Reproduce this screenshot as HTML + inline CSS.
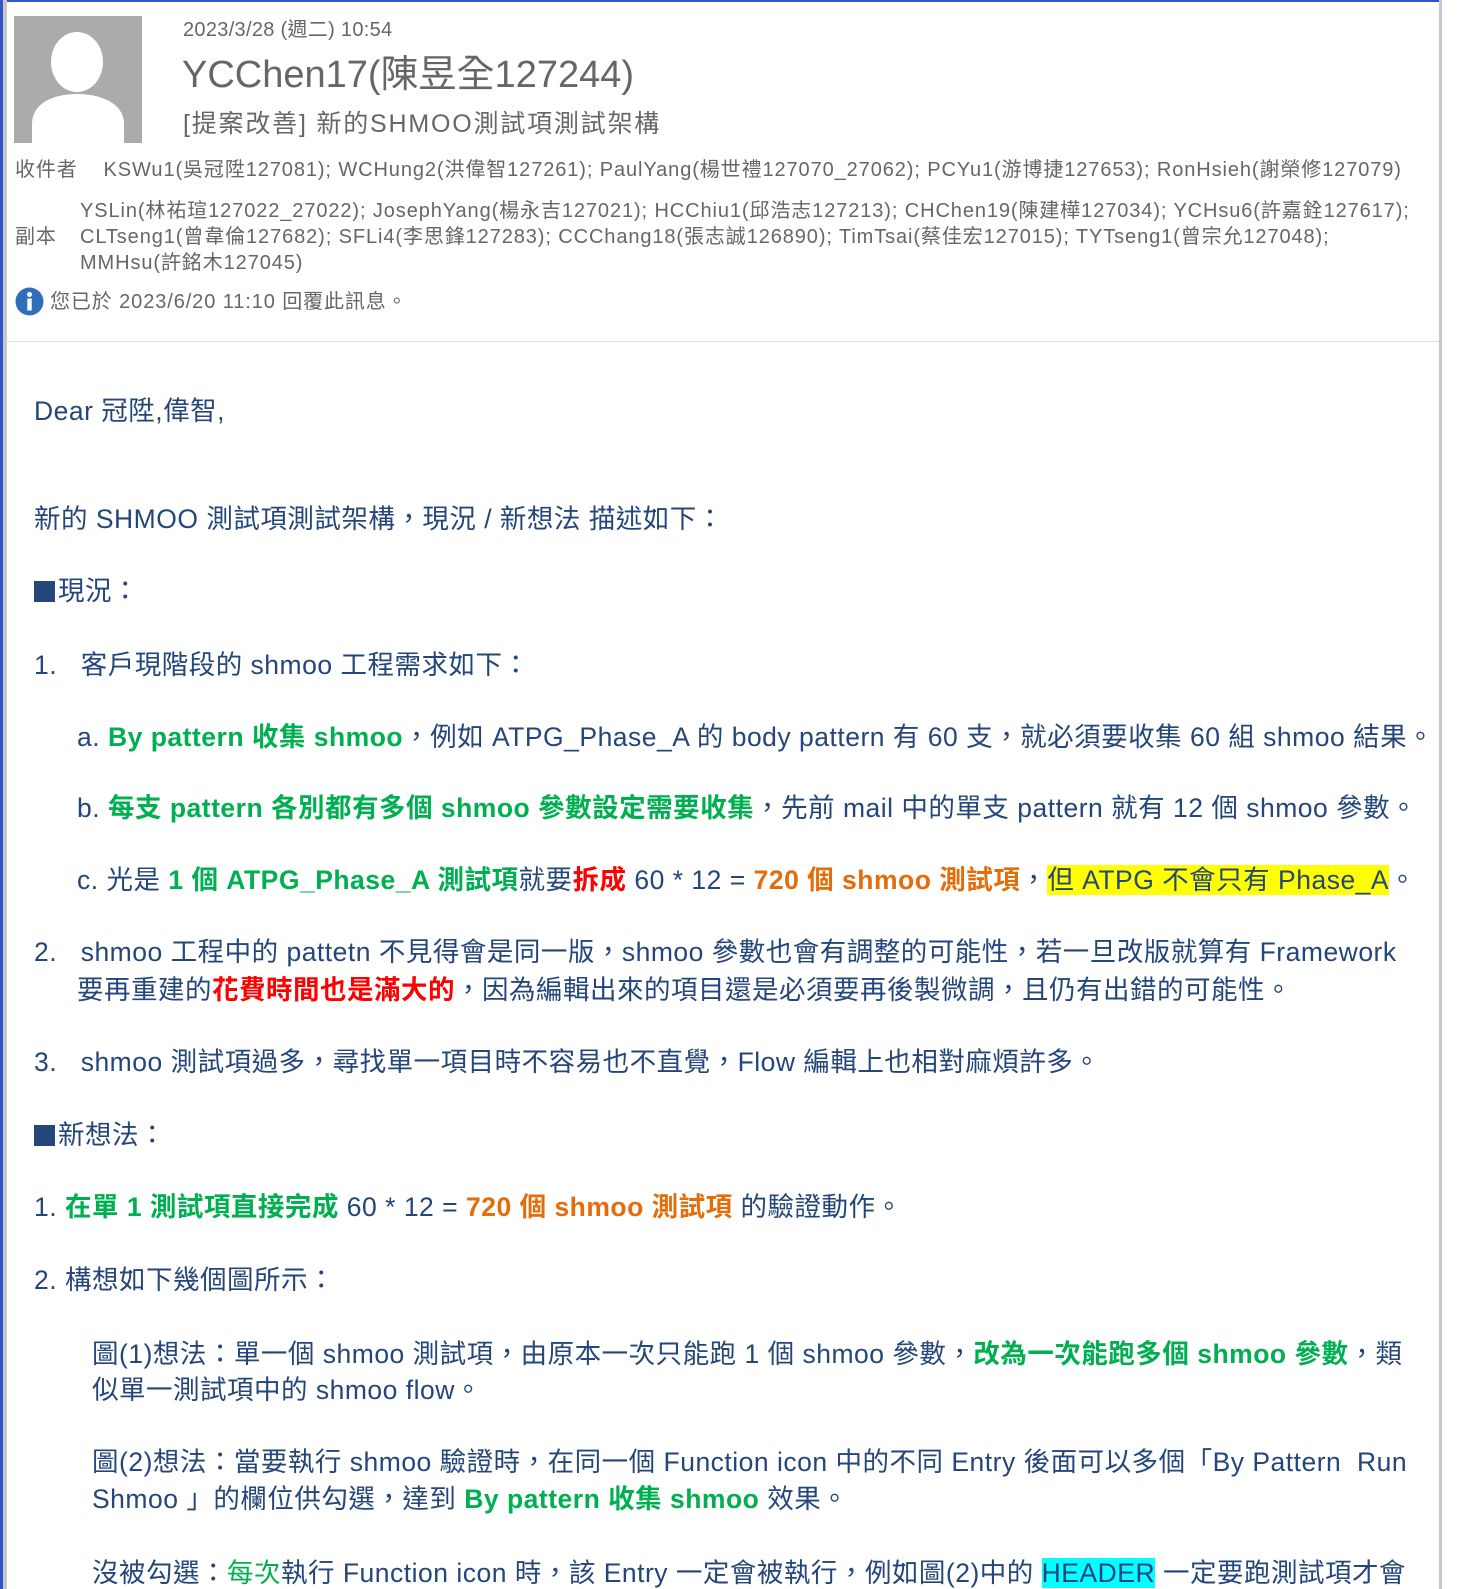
<!DOCTYPE html>
<html><head><meta charset="utf-8">
<style>
html,body{margin:0;padding:0}
body{width:1462px;height:1589px;position:relative;background:#fff;overflow:hidden;font-family:"Liberation Sans","Noto Sans CJK TC",sans-serif;}
.frame-l{position:absolute;left:0;top:0;width:3px;height:1589px;background:#3355cc}
.frame-l2{position:absolute;left:3px;top:0;width:4px;height:1589px;background:#c8c8c8}
.frame-t{position:absolute;left:0;top:0;width:1462px;height:2px;background:#3355cc}
.frame-r{position:absolute;left:1439px;top:0;width:3px;height:1589px;background:#c8c8d0}
.frame-r2{position:absolute;left:1442px;top:0;width:20px;height:1589px;background:#fff}
.t{position:absolute;white-space:nowrap;line-height:1}
.h{color:#666}
.b{color:#24467a;font-size:26.5px;letter-spacing:0.5px}
.g{color:#00b050;font-weight:bold}
.o{color:#e46c0a;font-weight:bold}
.r{color:#ff0000;font-weight:bold}
.gn{color:#00b050}
.y{background:#ffff00}
.c{background:#00ffff}
.sq{display:inline-block;width:21px;height:21px;background:#24467a;margin-right:3px;vertical-align:-2px}
.hr{font-size:20px;letter-spacing:0.9px}
</style></head><body>
<div class="frame-t"></div><div class="frame-l"></div><div class="frame-l2"></div><div class="frame-r"></div><div class="frame-r2"></div>

<svg style="position:absolute;left:14px;top:16px" width="128" height="127" viewBox="0 0 128 127">
<rect width="128" height="127" fill="#ababab"/>
<ellipse cx="63" cy="46" rx="26" ry="30" fill="#fff"/>
<path d="M18 127 V108 C18 88 38 78 63 78 C88 78 110 88 110 108 V127 Z" fill="#fff"/>
</svg>

<div class="t h" style="left:183px;top:20px;font-size:20px;letter-spacing:0.3px">2023/3/28 (週二) 10:54</div>
<div class="t h" style="left:182px;top:56px;font-size:38px;letter-spacing:0px">YCChen17(陳昱全127244)</div>
<div class="t h" style="left:183px;top:112px;font-size:25px;letter-spacing:1.8px">[提案改善] 新的SHMOO測試項測試架構</div>

<div class="t h hr" style="left:15px;top:160px">收件者&nbsp;&nbsp;&nbsp; KSWu1(吳冠陞127081); WCHung2(洪偉智127261); PaulYang(楊世禮127070_27062); PCYu1(游博捷127653); RonHsieh(謝榮修127079)</div>
<div class="t h hr" style="left:80px;top:201px">YSLin(林祐瑄127022_27022); JosephYang(楊永吉127021); HCChiu1(邱浩志127213); CHChen19(陳建樺127034); YCHsu6(許嘉銓127617);</div>
<div class="t h hr" style="left:15px;top:227px">副本</div>
<div class="t h hr" style="left:80px;top:227px">CLTseng1(曾韋倫127682); SFLi4(李思鋒127283); CCChang18(張志誠126890); TimTsai(蔡佳宏127015); TYTseng1(曾宗允127048);</div>
<div class="t h hr" style="left:80px;top:253px">MMHsu(許銘木127045)</div>

<svg style="position:absolute;left:15px;top:287px" width="29" height="29" viewBox="0 0 29 29"><circle cx="14.5" cy="14.5" r="14" fill="#2f6eba"/><circle cx="14.5" cy="7.5" r="2.5" fill="#fff"/><rect x="12.3" y="11.5" width="4.4" height="12" fill="#fff"/></svg>
<div class="t h hr" style="left:50px;top:292px">您已於 2023/6/20 11:10 回覆此訊息。</div>

<div style="position:absolute;left:7px;top:341px;width:1432px;height:1px;background:#ddd"></div>

<div class="t b" style="left:34px;top:398px">Dear 冠陞,偉智,</div>
<div class="t b" style="left:34px;top:506px">新的 SHMOO 測試項測試架構，現況 / 新想法 描述如下：</div>
<div class="t b" style="left:34px;top:578px"><span class="sq"></span>現況：</div>
<div class="t b" style="left:34px;top:652px">1.&nbsp;&nbsp; 客戶現階段的 shmoo 工程需求如下：</div>
<div class="t b" style="left:77px;top:724px">a. <span class="g">By pattern 收集 shmoo</span>，例如 ATPG_Phase_A 的 body pattern 有 60 支，就必須要收集 60 組 shmoo 結果。</div>
<div class="t b" style="left:77px;top:795px">b. <span class="g">每支 pattern 各別都有多個 shmoo 參數設定需要收集</span>，先前 mail 中的單支 pattern 就有 12 個 shmoo 參數。</div>
<div class="t b" style="left:77px;top:867px">c. 光是 <span class="g">1 個 ATPG_Phase_A 測試項</span>就要<span class="r">拆成</span> 60 * 12 = <span class="o">720 個 shmoo 測試項</span>，<span class="y">但 ATPG 不會只有 Phase_A</span>。</div>
<div class="t b" style="left:34px;top:939px">2.&nbsp;&nbsp; shmoo 工程中的 pattetn 不見得會是同一版，shmoo 參數也會有調整的可能性，若一旦改版就算有 Framework</div>
<div class="t b" style="left:77px;top:977px">要再重建的<span class="r">花費時間也是滿大的</span>，因為編輯出來的項目還是必須要再後製微調，且仍有出錯的可能性。</div>
<div class="t b" style="left:34px;top:1049px">3.&nbsp;&nbsp; shmoo 測試項過多，尋找單一項目時不容易也不直覺，Flow 編輯上也相對麻煩許多。</div>
<div class="t b" style="left:34px;top:1122px"><span class="sq"></span>新想法：</div>
<div class="t b" style="left:34px;top:1194px">1. <span class="g">在單 1 測試項直接完成</span> 60 * 12 = <span class="o">720 個 shmoo 測試項</span> 的驗證動作。</div>
<div class="t b" style="left:34px;top:1267px">2. 構想如下幾個圖所示：</div>
<div class="t b" style="left:92px;top:1341px">圖(1)想法：單一個 shmoo 測試項，由原本一次只能跑 1 個 shmoo 參數，<span class="g">改為一次能跑多個 shmoo 參數</span>，類</div>
<div class="t b" style="left:92px;top:1377px">似單一測試項中的 shmoo flow。</div>
<div class="t b" style="left:92px;top:1449px">圖(2)想法：當要執行 shmoo 驗證時，在同一個 Function icon 中的不同 Entry 後面可以多個「By Pattern&nbsp; Run</div>
<div class="t b" style="left:92px;top:1486px">Shmoo 」的欄位供勾選，達到 <span class="g">By pattern 收集 shmoo</span> 效果。</div>
<div class="t b" style="left:92px;top:1560px">沒被勾選：<span class="gn">每次</span>執行 Function icon 時，該 Entry 一定會被執行，例如圖(2)中的 <span class="c">HEADER</span> 一定要跑測試項才會</div>
</body></html>
